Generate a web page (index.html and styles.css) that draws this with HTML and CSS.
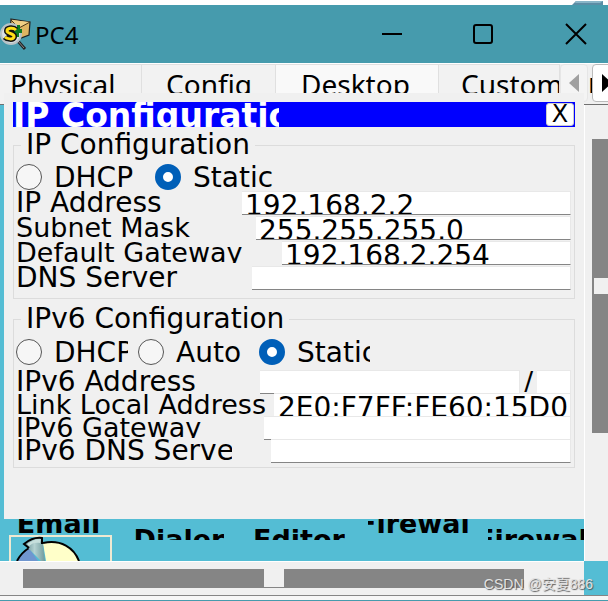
FILE: index.html
```html
<!DOCTYPE html>
<html lang="en">
<head>
<meta charset="utf-8">
<title>PC4</title>
<link rel="stylesheet" href="styles.css">
</head>
<body>
<div class="backdrop"><svg class="backdrop-shape" viewBox="0 0 31 5"><path d="M0 5 4 1H31V5Z" fill="#5b8da5"/><path d="M4 1H31L28 3H3Z" fill="#88b5c8"/></svg></div>
<header class="titlebar">
  <svg class="app-icon" viewBox="0 0 32 34">
    <path d="M17 23 25 32" stroke="#222" stroke-width="3"/>
    <path d="M18 24 24 31" stroke="#888" stroke-width="1"/>
    <path d="M11 2 30 5 29 18 21 21 10 15Z" fill="#dfb562" stroke="#222" stroke-width="1.2"/>
    <path d="M11 3 19 11 30 5" fill="#f0cf86" stroke="#4a3415" stroke-width="1"/>
    <circle cx="11" cy="17" r="10" fill="#d9e2e6" stroke="#b8c2c6" stroke-width="2"/>
    <path d="M13 11h4v-3h3v4h2v4h-3v4h-5z" fill="#0d7a22"/>
    <path d="M16 13C13 10 7 11 7 14C7 17 15 16 14 20C13 23 7 22 5 20" fill="none" stroke="#111" stroke-width="6"/>
    <path d="M16 13C13 10 7 11 7 14C7 17 15 16 14 20C13 23 7 22 5 20" fill="none" stroke="#ffdf16" stroke-width="3"/>
  </svg>
  <h1 class="window-title">PC4</h1>
  <div class="window-buttons">
    <button aria-label="Minimize"><svg viewBox="0 0 22 22"><path d="M1 11H21"/></svg></button>
    <button aria-label="Maximize"><svg viewBox="0 0 22 22"><rect x="1" y="2" width="18" height="18" rx="2"/></svg></button>
    <button aria-label="Close"><svg viewBox="0 0 22 22"><path d="M1 1 21 21M21 1 1 21"/></svg></button>
  </div>
</header>
<nav class="tabs">
  <button class="tab tab-physical">Physical</button>
  <button class="tab tab-config">Config</button>
  <button class="tab tab-active">Desktop</button>
  <button class="tab tab-custom">Custom I</button>
  <div class="tab-scroll">
    <button class="scroll-left" aria-label="Scroll left"><svg viewBox="0 0 10 18"><path d="M10 0V18L0 9Z" fill="#a0a0a0"/></svg></button>
    <span class="tab-peek">n</span>
    <button class="scroll-right" aria-label="Scroll right"><svg viewBox="0 0 10 18"><path d="M0 0V18L10 9Z" fill="#000"/></svg></button>
  </div>
</nav>
<div class="workspace">
  <main class="desktop">
    <section class="dialog">
      <header class="dialog-bar">
        <h2>IP Configuration</h2>
        <button class="dialog-close">X</button>
      </header>
      <fieldset class="group ipv4">
        <legend>IP Configuration</legend>
        <div class="modes">
          <input type="radio" name="v4" id="v4-dhcp"><label class="mode-dhcp" for="v4-dhcp">DHCP</label>
          <input type="radio" name="v4" id="v4-static" checked><label for="v4-static">Static</label>
        </div>
        <div class="row"><label class="w-ip" for="ip">IP Address</label><input type="text" id="ip" value="192.168.2.2"></div>
        <div class="row"><label class="w-mask" for="mask">Subnet Mask</label><input type="text" id="mask" value="255.255.255.0"></div>
        <div class="row"><label class="w-gate" for="gate">Default Gateway</label><input type="text" id="gate" value="192.168.2.254"></div>
        <div class="row"><label class="w-dns" for="dns">DNS Server</label><input type="text" id="dns"></div>
      </fieldset>
      <fieldset class="group ipv6">
        <legend>IPv6 Configuration</legend>
        <div class="modes">
          <input type="radio" name="v6" id="v6-dhcp"><label class="mode-dhcp6" for="v6-dhcp">DHCP</label>
          <input type="radio" name="v6" id="v6-auto"><label class="mode-auto" for="v6-auto">Auto</label>
          <input type="radio" name="v6" id="v6-static" checked><label class="mode-static6" for="v6-static">Static</label>
        </div>
        <div class="row"><label class="w-ip6" for="ip6">IPv6 Address</label><input type="text" id="ip6"><label class="slash" for="prefix">/</label><input class="prefix" type="text" id="prefix"></div>
        <div class="row"><label class="w-link" for="link">Link Local Address</label><input class="link" type="text" id="link" value="2E0:F7FF:FE60:15D0"></div>
        <div class="row"><label class="w-gate6" for="gate6">IPv6 Gateway</label><input type="text" id="gate6"></div>
        <div class="row"><label class="w-dns6" for="dns6"><span>IPv6 DNS Server</span></label><input type="text" id="dns6"></div>
      </fieldset>
    </section>
    <div class="apps">
      <a class="app app-email" href="#email"><span class="app-name high">Email</span>
        <svg class="chart" viewBox="0 0 103 26">
          <defs>
            <linearGradient id="wedge"><stop offset="0" stop-color="#5f8c90"/><stop offset=".5" stop-color="#b4d2d1"/><stop offset="1" stop-color="#6f9a9c"/></linearGradient>
          </defs>
          <path d="M1 26V1H102V26" fill="none" stroke="#efe9d2" stroke-width="2"/>
          <path d="M8 26C11 20 15 16 20 13L29 26Z" fill="#7096cf"/>
          <path d="M8 26C11 20 15 16 20 13" fill="none" stroke="#000" stroke-width="2"/>
          <path d="M34 8C52 4 65 13 70 26H37Z" fill="#ffffc9"/>
          <path d="M34 8C52 4 65 13 70 26" fill="none" stroke="#000" stroke-width="2"/>
          <path d="M15 9C20 5 26 2 33 3L36 26H32Z" fill="url(#wedge)"/>
          <path d="M20 13 15 9C20 5 26 2 33 3V9" fill="none" stroke="#000" stroke-width="2"/>
          <path d="M18 9C22 6 27 4 32 4L31 8C27 7 23 8 20 11Z" fill="#c6dfdc"/>
        </svg></a>
      <a class="app app-dialer" href="#dialer"><span class="app-name low">Dialer</span></a>
      <a class="app app-editor" href="#editor"><span class="app-name low">Editor</span></a>
      <a class="app app-fire" href="#firewall"><span class="app-name high">Firewall</span></a>
      <a class="app app-fire6" href="#firewall6"><span class="app-name low">Firewall</span></a>
    </div>
  </main>
  <div class="vscroll"><div class="vtrack"><div class="thumb"></div></div></div>
  <div class="hscroll"><div class="htrack"><div class="thumb"></div></div></div>
  <div class="corner"></div>
</div>
<div class="frame"></div>
<p class="watermark">CSDN @安夏886</p>
</body>
</html>
```
FILE: styles.css
```css
* { box-sizing: border-box; }
body {
  margin: 0;
  min-height: 100vh;
  display: flex;
  flex-direction: column;
  overflow: hidden;
  position: relative;
  background: #f0f0f0;
  color: #000;
  font: 27px/24px "DejaVu Sans", Verdana, sans-serif;
}
button, input { font: inherit; color: inherit; margin: 0; padding: 0; border: 0; border-radius: 0; }
h1, h2, p { margin: 0; font-weight: normal; }

.backdrop { height: 5px; background: #fff; display: flex; justify-content: flex-end; padding-right: 5px; }
.backdrop-shape { width: 31px; height: 5px; }

.titlebar { height: 58px; background: #469bad; display: flex; align-items: center; }
.app-icon { width: 32px; height: 34px; }
.window-title { font: 24px/32px "Noto Sans", sans-serif; padding: 1px 0 0 3px; }
.window-buttons { margin-left: auto; display: flex; gap: 70px; padding-right: 21px; }
.window-buttons button { width: 22px; height: 22px; background: none; }
.window-buttons svg { display: block; width: 22px; height: 22px; fill: none; stroke: #000; stroke-width: 2; }

.tabs { height: 42px; display: flex; align-items: flex-start; background: #f0f0f0; border-bottom: 1px solid #707070; border-top: 1px solid #fff; overflow: hidden; }
.tab { flex: none; height: 42px; padding: 3px 0 0; background: #f2f2f2; border: 1px solid #e0e0e0; border-left: 0; font: 28px/32px "Noto Sans", sans-serif; text-align: left; display: flex; align-items: flex-start; }
.tab-physical { width: 142px; padding-left: 10px; }
.tab-config { width: 134px; padding-left: 24px; }
.tab-active { width: 163px; padding-left: 25px; background: #f9f9f9; }
.tab-custom { flex: 1; min-width: 0; padding-left: 22px; overflow: hidden; white-space: nowrap; }
.tab-scroll { flex: none; display: flex; width: 48px; height: 40px; }
.tab-scroll button { width: 28px; height: 38px; background: #f4f4f4; border: 1px solid #e6e6e6; border-radius: 4px; display: flex; align-items: center; justify-content: center; flex: none; }
.tab-scroll svg { width: 10px; height: 18px; }
.tab-scroll .scroll-right { background: #fff; border-color: #bbb; justify-content: flex-start; padding-left: 9px; }
.tab-peek { width: 4px; overflow: hidden; padding-top: 8px; flex: none; }

.workspace { flex: 1; display: grid; grid-template-columns: 1fr 24px; grid-template-rows: 1fr 34px; }
.desktop { background: #54bdd4; display: flex; flex-direction: column; min-width: 0; }
.dialog { flex: 1; position: relative; margin: -12px 0 0 4px; padding: 9px 9px 0; background: #f0f0f0; }
.dialog-bar { height: 25px; background: #00f; color: #fff; display: flex; justify-content: space-between; align-items: center; padding-right: 1px; }
.dialog-bar h2 { font-size: 33px; font-weight: bold; line-height: 28px; height: 25px; width: 266px; overflow: hidden; white-space: nowrap; }
.dialog-close { width: 28px; height: 23px; background: #fff; color: #000; border: 1px solid #ccc; border-radius: 3px; font: 24px/21px "DejaVu Sans", sans-serif; }

.group { margin: 0; min-width: 0; border: 1px solid #dcdcdc; padding: 0 3px 0 2px; }
.group legend { margin-left: 5px; padding: 0 5px; font-size: 28px; line-height: 30px; height: 30px; }
.ipv4 { margin-top: 3px; padding-bottom: 7px; }
.ipv6 { margin-top: 5px; padding-bottom: 5px; }
.modes { display: flex; height: 25px; margin: 4px 0 2px; }
.ipv6 .modes { margin: 5px 0 6px; }
.modes label { padding-left: 12px; height: 25px; line-height: 28px; overflow: hidden; white-space: nowrap; flex: none; }
.modes input { appearance: none; flex: none; width: 26px; height: 26px; border: 1px solid #555; border-radius: 50%; background: #f6f6f6; }
.modes input:checked { border: 8px solid #005fb8; background: #fff; }
.mode-dhcp { width: 113px; }
.mode-dhcp6 { width: 86px; margin-right: 10px; }
.mode-auto { width: 95px; }
.mode-static6 { width: 85px; }

.row { display: flex; height: 25px; }
.ipv6 .row { height: 23px; }
.row label { flex: none; height: 22px; overflow: hidden; white-space: nowrap; }
.row input { flex: 1; min-width: 0; height: 24px; padding: 4px 3px 0; background: #fff; border: solid #e8e8e8; border-width: 1px 1px 1px 0; border-bottom-color: #858585; outline: 0; }
.w-ip { width: 226px; }
.w-mask { width: 240px; }
.w-gate { width: 266px; }
.w-dns { width: 236px; }
.w-ip6 { width: 244px; }
.w-link { width: 258px; }
.w-gate6 { width: 248px; }
.w-dns6 { width: 255px; }
.w-dns6 span { display: block; width: 216px; overflow: hidden; }
.row .slash { width: 17px; padding-left: 4px; }
.row .prefix { flex: none; width: 34px; }
.row input, .w-ip, .w-dns, .w-ip6, .w-dns6, .modes { font-size: 28px; }
.row .link { padding: 4px 2px 0 0; text-align: right; }

.apps { height: 42px; display: flex; overflow: hidden; font-weight: bold; }
.app { flex: none; color: #000; text-decoration: none; display: flex; flex-direction: column; }
.app-name { display: flex; justify-content: center; overflow: hidden; white-space: nowrap; }
.high { height: 16px; line-height: 10px; }
.low { height: 11px; margin-top: 10px; line-height: 22px; }
.app-email { width: 103px; margin-left: 9px; }
.app-email .high { padding-right: 4px; }
.app-dialer { width: 90px; margin-left: 22px; }
.app-editor { width: 92px; margin-left: 29px; }
.app-fire { width: 101px; margin-left: 23px; }
.app-fire6 { width: 97px; margin-left: 19px; }
.chart { width: 103px; height: 26px; flex: none; }

.vscroll { border-left: 1px solid #fff; padding: 34px 0 128px 7px; background: #f0f0f0; }
.vtrack { height: 100%; background: #858585; padding: 139px 0 0 2px; }
.vtrack .thumb { height: 16px; background: #f0f0f0; }
.hscroll { border-top: 1px solid #fff; padding: 7px 60px 7px 23px; background: #f0f0f0; }
.htrack { height: 19px; background: #858585; display: flex; justify-content: center; }
.htrack .thumb { width: 20px; height: 18px; background: #f0f0f0; }
.corner { background: #54bdd4; }
.frame { height: 6px; border-top: 1px solid #858585; border-bottom: 1px solid #469bad; background: #f6f6f6; }
.watermark { position: absolute; right: 15px; bottom: 6px; font: 14px/22px "Liberation Sans", "Noto Sans CJK SC", sans-serif; color: #e2e2e2; text-shadow: 1px 1px 1px #555; }
```
